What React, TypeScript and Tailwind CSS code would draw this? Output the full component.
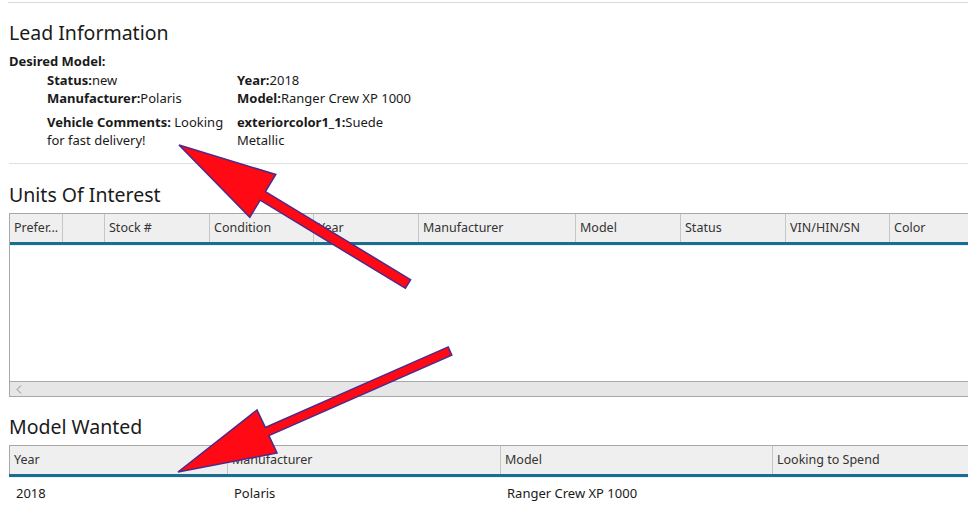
import React from "react";

const font = { fontFamily: '"Noto Sans", "Open Sans", Arial, sans-serif' };

function Arrows() {
  return (
    <svg
      className="absolute left-0 top-0 pointer-events-none"
      width={968}
      height={522}
      viewBox="0 0 968 522"
    >
      <polygon
        points="179,145 275.8,174.5 265.4,191.6 410.6,279.7 405.4,288.3 260.2,200.2 249.8,217.3"
        fill="#ff0a14"
        stroke="#4b2a8c"
        strokeWidth={1.5}
        strokeLinejoin="miter"
      />
      <polygon
        points="178,472 257,410 265.3,427.4 448.2,346.9 451.8,355.1 268.9,435.6 277,453"
        fill="#ff0a14"
        stroke="#4b2a8c"
        strokeWidth={1.5}
        strokeLinejoin="miter"
      />
    </svg>
  );
}

function HeaderCell({ w, children }: { w: string; children?: React.ReactNode }) {
  return (
    <div
      className={`${w} shrink-0 h-[28px] flex items-center pl-[4px] border-r border-[#c6c6c6] text-[12.5px] text-[#333] whitespace-nowrap overflow-hidden`}
    >
      {children}
    </div>
  );
}

export default function App() {
  return (
    <div className="relative w-[968px] h-[522px] overflow-hidden bg-white text-[#1a1a1a]" style={font}>
      <div className="mt-[2px] ml-[8px] h-[1px] bg-[#d9d9d9]" />

      <div className="pl-[9px]">
        <h1 className="mt-[16px] text-[19.5px] leading-[28px] font-normal text-[#1a1a1a]">Lead Information</h1>
        <div className="mt-[5px] text-[13px] leading-[18px] font-bold">Desired Model:</div>
        <div className="pl-[38px] text-[13px] leading-[18px]">
          <div className="mt-[1px] grid grid-cols-[190px_190px]">
            <div>
              <span className="font-bold">Status:</span>new
            </div>
            <div>
              <span className="font-bold">Year:</span>2018
            </div>
            <div>
              <span className="font-bold">Manufacturer:</span>Polaris
            </div>
            <div>
              <span className="font-bold">Model:</span>Ranger Crew XP 1000
            </div>
          </div>
          <div className="mt-[6px] grid grid-cols-[190px_180px]">
            <div className="pr-[4px]">
              <span className="font-bold">Vehicle Comments:</span> Looking for fast delivery!
            </div>
            <div>
              <span className="font-bold">exteriorcolor1_1:</span>Suede Metallic
            </div>
          </div>
        </div>
      </div>

      <div className="mt-[14px] ml-[9px] h-[1px] bg-[#e0e0e0]" />

      <div className="pl-[9px]">
        <h2 className="mt-[17px] text-[19.5px] leading-[28px] font-normal">Units Of Interest</h2>
        <div className="mt-[4px] w-[1000px] border-l border-[#a8a8a8]">
          <div className="flex bg-[#efefef] border-t border-[#a8a8a8]">
            <HeaderCell w="w-[53px]">Prefer...</HeaderCell>
            <HeaderCell w="w-[42px]" />
            <HeaderCell w="w-[105px]">Stock #</HeaderCell>
            <HeaderCell w="w-[104px]">Condition</HeaderCell>
            <HeaderCell w="w-[105px]">Year</HeaderCell>
            <HeaderCell w="w-[157px]">Manufacturer</HeaderCell>
            <HeaderCell w="w-[105px]">Model</HeaderCell>
            <HeaderCell w="w-[105px]">Status</HeaderCell>
            <HeaderCell w="w-[104px]">VIN/HIN/SN</HeaderCell>
            <HeaderCell w="w-[120px]">Color</HeaderCell>
          </div>
          <div className="h-[3px] bg-[#1d6d90]" />
          <div className="h-[136px] bg-white border-t border-[#e6f4fa]" />
          <div className="h-[16px] bg-[#e6e6e6] border-t border-b border-[#a8a8a8] flex items-center pl-[6px]">
            <svg width="6" height="9" viewBox="0 0 6 9">
              <path d="M5 0.5 L1 4.5 L5 8.5" fill="none" stroke="#8a8a8a" strokeWidth="1" />
            </svg>
          </div>
        </div>

        <h2 className="mt-[16px] text-[19.5px] leading-[28px] font-normal">Model Wanted</h2>
        <div className="mt-[4px] w-[1000px]">
          <div className="flex bg-[#efefef] border-t border-l border-[#a8a8a8]">
            <HeaderCell w="w-[218px]">Year</HeaderCell>
            <HeaderCell w="w-[273px]">Manufacturer</HeaderCell>
            <HeaderCell w="w-[272px]">Model</HeaderCell>
            <HeaderCell w="w-[220px]">Looking to Spend</HeaderCell>
          </div>
          <div className="h-[3px] bg-[#1d6d90]" />
          <div className="flex h-[32px] items-center text-[13px] text-[#1a1a1a] border-t border-[#e6f4fa]">
            <div className="w-[218px] pl-[7px]">2018</div>
            <div className="w-[273px] pl-[7px]">Polaris</div>
            <div className="w-[272px] pl-[7px]">Ranger Crew XP 1000</div>
          </div>
        </div>
      </div>

      <Arrows />
    </div>
  );
}
